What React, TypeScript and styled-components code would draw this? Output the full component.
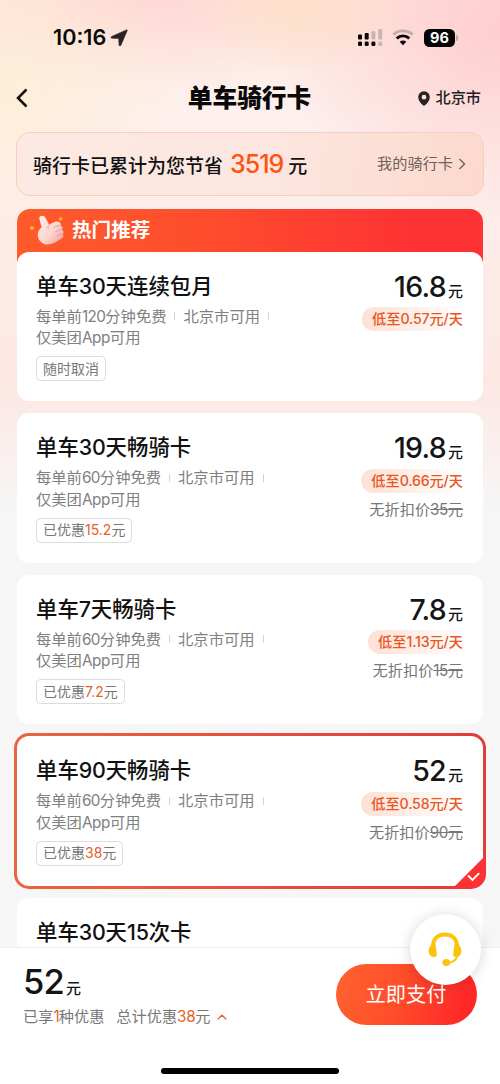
import React from "react";
import styled, { createGlobalStyle, css } from "styled-components";

const GlobalStyle = createGlobalStyle`
  * { box-sizing: border-box; }
  body {
    margin: 0;
    font-family: Inter, "Noto Sans CJK SC", sans-serif;
    color: #1a1a1a;
    -webkit-font-smoothing: antialiased;
  }
`;

const Screen = styled.div`
  position: relative;
  display: flex;
  flex-direction: column;
  width: 500px;
  height: 1084px;
  overflow: hidden;
  background:
    linear-gradient(180deg, rgba(246, 246, 246, 0) 380px, #f6f6f6 510px),
    radial-gradient(ellipse 110px 60px at 300px 12px, rgba(254, 226, 196, 0.7), rgba(254, 226, 196, 0)),
    radial-gradient(ellipse 190px 170px at 0 90px, rgba(254, 238, 214, 0.9), rgba(254, 238, 214, 0)),
    radial-gradient(ellipse 230px 190px at 500px 30px, rgba(254, 204, 206, 0.95), rgba(254, 204, 206, 0)),
    radial-gradient(ellipse 330px 90px at 130px 0, rgba(254, 214, 212, 0.95), rgba(254, 214, 212, 0)),
    linear-gradient(180deg, #feebe0 0, #fdf0ee 120px, #fdebe8 260px, #fde7e3 400px);
`;

const StatusBar = styled.div`
  display: flex;
  align-items: center;
  height: 75px;
  padding: 0 42px 0 53px;
`;

const Clock = styled.span`
  margin-top: -1px;
  font-size: 21.6px;
  font-weight: 600;
  letter-spacing: 0;
  line-height: 24px;
  color: #0c0a0a;
`;

const StatusIcons = styled.div`
  display: flex;
  align-items: center;
  margin-left: auto;
`;

const Battery = styled.span`
  display: flex;
  align-items: center;
  justify-content: center;
  width: 31px;
  height: 18px;
  margin-left: 10px;
  border-radius: 5.5px;
  background: #050505;
  color: #fff;
  font-size: 14.5px;
  font-weight: 700;
`;

const BatteryTip = styled.span`
  width: 2px;
  height: 6px;
  margin-left: 1px;
  border-radius: 0 2px 2px 0;
  background: #b9a3a5;
`;

const NavBar = styled.div`
  display: grid;
  grid-template-columns: 1fr auto 1fr;
  align-items: center;
  height: 46px;
  padding: 0 19px 0 15px;
`;

const NavTitle = styled.h1`
  margin: 0;
  padding-left: 3px;
  font-size: 24.7px;
  font-weight: 900;
  line-height: 34px;
  color: #0a0808;
`;

const City = styled.span`
  display: flex;
  align-items: center;
  justify-content: flex-end;
  gap: 5px;
  font-size: 15.2px;
  font-weight: 500;
  line-height: 22px;
  color: #222;
`;

const SavingsBanner = styled.div`
  display: flex;
  align-items: center;
  justify-content: space-between;
  height: 64px;
  margin: 11px 16px 0 16px;
  padding: 0 17px 0 16px;
  border: 1px solid #f9cdbe;
  border-radius: 14px;
  background: linear-gradient(100deg, #fde9e3 0%, #fce6df 55%, #fcd9cc 100%);
`;

const SavingsText = styled.span`
  display: flex;
  align-items: baseline;
  padding-top: 3px;
  font-size: 19px;
  font-weight: 500;
  line-height: 34px;
  color: #111;
  white-space: nowrap;
`;

const SavingsAmount = styled.span`
  margin: 0 5px 0 7px;
  font-size: 25px;
  letter-spacing: -1px;
  color: #fc5312;
`;

const BannerLink = styled.span`
  display: flex;
  align-items: center;
  gap: 5px;
  font-size: 15.2px;
  line-height: 22px;
  color: #6f5f5a;
`;

const HotHeader = styled.div`
  display: flex;
  align-items: flex-start;
  height: 61px;
  margin: 13px 17px -18.5px;
  padding: 3px 0 0 12px;
  border-radius: 13px 13px 0 0;
  background: linear-gradient(90deg, #fe5a2b 0%, #fe4d2d 40%, #fe3234 85%);
`;

const HotLabel = styled.span`
  margin-left: 4px;
  font-size: 19.6px;
  font-weight: 700;
  line-height: 36px;
  color: #fff;
`;

const CardList = styled.div`
  display: flex;
  flex: 1;
  flex-direction: column;
  gap: 12px;
  min-height: 0;
  padding: 0 17px;
  overflow: hidden;
`;

const Card = styled.article<{ $selected?: boolean }>`
  position: relative;
  display: flex;
  flex: none;
  justify-content: space-between;
  height: 149.5px;
  padding: 20.4px 20px 0 19px;
  border-radius: 12px;
  background: #fff;
  ${(p) =>
    p.$selected &&
    css`
      height: 155.5px;
      margin: -3px;
      border: 3px solid transparent;
      border-radius: 15px;
      background:
        linear-gradient(#fff, #fff) padding-box,
        linear-gradient(90deg, #ea6440, #e33a3c) border-box;
    `}
`;

const CardInfo = styled.div`
  display: flex;
  flex-direction: column;
  align-items: flex-start;
`;

const CardTitle = styled.h2`
  margin: 0;
  font-size: 21.4px;
  font-weight: 500;
  line-height: 29px;
  color: #111;
  white-space: nowrap;
`;

const Features = styled.div`
  margin-top: 4.7px;
  font-size: 15.3px;
  line-height: 21.7px;
  color: #808080;
`;

const FeatureLine = styled.div`
  display: flex;
  align-items: center;
  height: 21.7px;
  white-space: nowrap;
`;

const Divider = styled.i`
  width: 1px;
  height: 8px;
  margin: 0 8px;
  background: #d4d4d4;
`;

const Tag = styled.span`
  display: flex;
  align-items: center;
  height: 25px;
  margin-top: 7.5px;
  padding: 0 6px;
  border: 1px solid #dcdcdc;
  border-radius: 4.5px;
  font-size: 14px;
  line-height: 20px;
  color: #777;
`;

const Accent = styled.span`
  color: #e4622c;
`;

const Digits = styled.span<{ $tracking: number }>`
  letter-spacing: ${(p) => p.$tracking}em;
`;

const CardPricing = styled.div`
  display: flex;
  flex-direction: column;
  align-items: flex-end;
`;

const Price = styled.div<{ $large?: boolean }>`
  display: flex;
  align-items: baseline;
  height: ${(p) => (p.$large ? 40 : 30)}px;
  font-size: ${(p) => (p.$large ? 34.5 : 28.5)}px;
  font-weight: 500;
  line-height: ${(p) => (p.$large ? 40 : 30)}px;
  letter-spacing: -0.025em;
  color: #151515;
`;

const Unit = styled.span`
  margin-left: 2px;
  font-size: 15px;
  line-height: 20px;
  letter-spacing: 0;
`;

const DailyBadge = styled.span`
  display: flex;
  align-items: center;
  height: 24px;
  margin-top: 5.2px;
  padding-left: 10px;
  border-radius: 12px 0 0 12px;
  background: linear-gradient(90deg, #fde1d5 0%, #fdece5 40%, #fff 100%);
  font-size: 14.2px;
  font-weight: 500;
  line-height: 22px;
  color: #e8571f;
  white-space: nowrap;
`;

const ListPrice = styled.span`
  margin-top: 6px;
  font-size: 15.2px;
  line-height: 22px;
  color: #777;
`;

const CornerCheck = styled.svg`
  position: absolute;
  right: -2px;
  bottom: -2px;
`;

const Footer = styled.footer`
  position: relative;
  display: flex;
  flex-direction: column;
  justify-content: space-between;
  height: 137px;
  padding: 15px 23px 10px;
  border-top: 1px solid #efefef;
  background: #fff;
`;

const CheckoutRow = styled.div`
  display: flex;
  justify-content: space-between;
`;

const TotalPrice = styled(Price)`
  margin-top: -1px;
`;

const Summary = styled.div`
  display: flex;
  align-items: center;
  margin-top: 4px;
  font-size: 15.2px;
  line-height: 22px;
  color: #777;
`;

const SummaryPart = styled.span`
  margin-right: 12px;
`;

const PayButton = styled.button`
  width: 141px;
  height: 61px;
  margin-top: 1px;
  padding: 0 1px 2px 0;
  border: 0;
  border-radius: 31px;
  background: linear-gradient(105deg, #ff6330 0%, #ff4d2a 45%, #ff2828 90%);
  color: #fff;
  font: 400 20.2px/28px "Noto Sans CJK SC", sans-serif;
`;

const SupportButton = styled.button`
  position: absolute;
  top: -34px;
  right: 19px;
  display: flex;
  align-items: center;
  justify-content: center;
  width: 71px;
  height: 71px;
  padding: 0 1px 0 0;
  border: 0;
  border-radius: 50%;
  background: #fff;
  box-shadow: 0 1px 14px rgba(0, 0, 0, 0.17);
`;

const HomeIndicator = styled.div`
  align-self: center;
  width: 178px;
  height: 6px;
  border-radius: 3px;
  background: #000;
`;

/** Adjusts the tracking of the latin digits inside a run of Chinese text. */
function Mixed({ text, tracking = -0.05 }: { text: string; tracking?: number }) {
  return (
    <>
      {text.split(/([0-9.]+|App)/).map((part, i) =>
        i % 2 ? <Digits key={i} $tracking={tracking}>{part}</Digits> : part
      )}
    </>
  );
}

function LocationArrow() {
  return (
    <svg width="18" height="18" viewBox="0 0 18 18" style={{ marginLeft: 4 }}>
      <path d="M16.3.9c.7-.3 1.200.2.9.9L11 16.200c-.5 1.100-1.900.9-2-.3l-.3-5.400c0-.6-.3-.9-.9-.9L1.900 9.300C.8 9.200.6 7.900 1.600 7.500Z" fill="#2b2424" stroke="#2b2424" strokeWidth="0.500" />
    </svg>
  );
}

function SignalIcon() {
  return (
    <svg width="26" height="18" viewBox="0 0 26 18">
      <g fill="#080606">
        <rect x="1" y="5.5" width="4" height="5" rx="1" />
        <rect x="7.7" y="4" width="4" height="6.5" rx="1" />
        <rect x="1" y="12.6" width="4" height="4.4" rx="1.3" />
        <rect x="7.7" y="12.6" width="4" height="4.4" rx="1.3" />
        <rect x="14.4" y="12.6" width="4" height="4.4" rx="1.3" />
      </g>
      <g fill="#c9b3b4">
        <rect x="14.4" y="2.2" width="4" height="8.3" rx="1" />
        <rect x="21.2" y="0" width="4" height="10.5" rx="1" />
        <rect x="21.2" y="12.6" width="4" height="4.4" rx="1.3" />
      </g>
    </svg>
  );
}

function WifiIcon() {
  return (
    <svg width="22" height="17" viewBox="0 0 22 17" style={{ marginLeft: 9 }}>
      <path d="M1.300 5.600C6.800.5 15.200.5 20.700 5.600" fill="none" stroke="#c3adaf" strokeWidth="2.800" />
      <path d="M4.700 9.400c3.600-3.400 9-3.400 12.600 0" fill="none" stroke="#080606" strokeWidth="2.900" />
      <path d="M7.700 12.700c1.900-1.700 4.700-1.700 6.600 0L11 16.200Z" fill="#080606" />
    </svg>
  );
}

function ThumbIcon() {
  return (
    <svg width="39" height="35" viewBox="0 0 39 35">
      <defs>
        <linearGradient id="skin" x1="0" y1="0" x2="1" y2="1">
          <stop offset="0" stopColor="#fff0e9" />
          <stop offset="0.55" stopColor="#fbd6cf" />
          <stop offset="1" stopColor="#ee9d94" />
        </linearGradient>
      </defs>
      <path d="M10.200 6.200c.5-2.800 4.300-3.200 6.100-.6l3.900 7.200c2-1.400 5.900-3.600 8.300-3.400 2.600.2 3.700 2.300 3.200 4.200 1.700.7 2.200 2.400 1.500 4.100 1.500 1 1.800 3 .7 4.300 1 1.500.4 3.500-1.300 4.400-4 2.800-9 5.600-13.300 6.100-4 .4-8.500-2.500-10-6.600-1.300-3.700.1-8.300 3.300-10.700Z" fill="url(#skin)" />
      <path d="M20.200 12.800c-1.300 1-1.700 2.500-1.100 3.800M31.500 13.600c-2.300-.6-4.700.6-6.600 2M33.200 17.700c-2.400-.4-4.600.7-6.400 2M33.900 22c-2.400-.2-4.300.8-6 2" fill="none" stroke="#e2958b" strokeWidth="0.900" strokeLinecap="round" />
      <circle cx="3" cy="16" r="2" fill="#ffb52b" />
      <circle cx="31.7" cy="7" r="1.8" fill="#ffb52b" />
    </svg>
  );
}

function HeadsetIcon() {
  return (
    <svg width="34" height="35" viewBox="0 0 34 35">
      <g stroke="#fcc30d" fill="none" strokeLinecap="round">
        <path d="M5 16.500C4.500 7 9.500 2.500 17 2.500S29.500 7 29 16.500" strokeWidth="4" />
        <path d="M29.200 23.500c-.7 4.300-3.600 6.500-8.500 7.200" strokeWidth="1.900" />
      </g>
      <path d="M3.700 12.500C.9 14.600.1 18 .9 21c.8 3.400 3.700 4.700 6.500 3.800 1-.3 1.500-1 1.400-2L7.800 13.500c-.2-1.800-2.700-2.100-4.100-1ZM30.300 12.500c2.800 2.100 3.600 5.500 2.800 8.500-.8 3.400-3.700 4.700-6.500 3.800-1-.3-1.500-1-1.400-2l1-9.300c.2-1.800 2.700-2.100 4.100-1Z" fill="#fcc30d" />
      <ellipse cx="18.3" cy="30.5" rx="3.9" ry="3.5" fill="#fcc30d" />
    </svg>
  );
}

interface Plan {
  title: string;
  minutes: number;
  price: string;
  daily: string;
  saved?: string;
  original?: string;
  selected?: boolean;
}

const plans: Plan[] = [
  { title: "单车30天连续包月", minutes: 120, price: "16.8", daily: "0.57" },
  { title: "单车30天畅骑卡", minutes: 60, price: "19.8", daily: "0.66", saved: "15.2", original: "35" },
  { title: "单车7天畅骑卡", minutes: 60, price: "7.8", daily: "1.13", saved: "7.2", original: "15" },
  { title: "单车90天畅骑卡", minutes: 60, price: "52", daily: "0.58", saved: "38", original: "90", selected: true },
];

function PlanCard({ plan }: { plan: Plan }) {
  return (
    <Card $selected={plan.selected}>
      <CardInfo>
        <CardTitle><Mixed text={plan.title} tracking={-0.01} /></CardTitle>
        <Features>
          <FeatureLine>
            <span><Mixed text={`每单前${plan.minutes}分钟免费`} tracking={-0.04} /></span>
            <Divider />
            <span>北京市可用</span>
            <Divider />
          </FeatureLine>
          <FeatureLine><span><Mixed text="仅美团App可用" tracking={-0.03} /></span></FeatureLine>
        </Features>
        <Tag>
          {plan.saved ? (
            <span>已优惠<Accent><Mixed text={plan.saved} tracking={0} /></Accent>元</span>
          ) : (
            "随时取消"
          )}
        </Tag>
      </CardInfo>
      <CardPricing>
        <Price>{plan.price}<Unit>元</Unit></Price>
        <DailyBadge><span><Mixed text={`低至${plan.daily}元/天`} tracking={-0.015} /></span></DailyBadge>
        {plan.original && (
          <ListPrice>无折扣价<s><Mixed text={`${plan.original}元`} tracking={-0.03} /></s></ListPrice>
        )}
      </CardPricing>
      {plan.selected && (
        <CornerCheck width="32" height="32" viewBox="0 0 32 32">
          <path d="M32 0v19a13 13 0 0 1-13 13H0Z" fill="#fd3033" />
          <path d="m15.500 20 4 3.900 6.200-6.200" fill="none" stroke="#fff" strokeWidth="1.900" strokeLinecap="round" />
        </CornerCheck>
      )}
    </Card>
  );
}

export default function App() {
  return (
    <Screen>
      <GlobalStyle />
      <StatusBar>
        <Clock>10:16</Clock>
        <LocationArrow />
        <StatusIcons>
          <SignalIcon />
          <WifiIcon />
          <Battery>96</Battery>
          <BatteryTip />
        </StatusIcons>
      </StatusBar>
      <NavBar>
        <svg width="14" height="20" viewBox="0 0 14 20">
          <path d="M11.500 1.500 3 10l8.500 8.500" fill="none" stroke="#141010" strokeWidth="2.500" />
        </svg>
        <NavTitle>单车骑行卡</NavTitle>
        <City>
          <svg width="12" height="15" viewBox="0 0 12 15">
            <path fillRule="evenodd" d="M6 .3a5.800 5.800 0 0 1 5.800 5.900c0 3.200-2.600 6-4.800 8.100-.6.500-1.400.5-2 0C2.800 12.200.2 9.400.2 6.200A5.800 5.800 0 0 1 6 .3Zm0 3.500a2.400 2.400 0 1 0 0 4.800 2.400 2.400 0 0 0 0-4.800Z" fill="#292424" />
          </svg>
          北京市
        </City>
      </NavBar>
      <SavingsBanner>
        <SavingsText>
          骑行卡已累计为您节省<SavingsAmount>3519</SavingsAmount>元
        </SavingsText>
        <BannerLink>
          我的骑行卡
          <svg width="8" height="12" viewBox="0 0 8 12">
            <path d="m1.500 1 5 5-5 5" fill="none" stroke="#6f5f5a" strokeWidth="1.400" />
          </svg>
        </BannerLink>
      </SavingsBanner>
      <HotHeader>
        <ThumbIcon />
        <HotLabel>热门推荐</HotLabel>
      </HotHeader>
      <CardList>
        {plans.map((plan) => (
          <PlanCard key={plan.title} plan={plan} />
        ))}
        <Card>
          <CardTitle><Mixed text="单车30天15次卡" tracking={-0.01} /></CardTitle>
        </Card>
      </CardList>
      <Footer>
        <CheckoutRow>
          <div>
            <TotalPrice $large>52<Unit>元</Unit></TotalPrice>
            <Summary>
              <SummaryPart>已享<Accent><Mixed text="1" /></Accent>种优惠</SummaryPart>
              <span>总计优惠<Accent><Mixed text="38" tracking={-0.02} /></Accent>元</span>
              <svg width="10" height="6" viewBox="0 0 10 6" style={{ marginLeft: 7 }}>
                <path d="m.8 5.200 4.200-4 4.200 4" fill="none" stroke="#e4622c" strokeWidth="1.300" />
              </svg>
            </Summary>
          </div>
          <PayButton>立即支付</PayButton>
        </CheckoutRow>
        <HomeIndicator />
        <SupportButton aria-label="客服">
          <HeadsetIcon />
        </SupportButton>
      </Footer>
    </Screen>
  );
}
